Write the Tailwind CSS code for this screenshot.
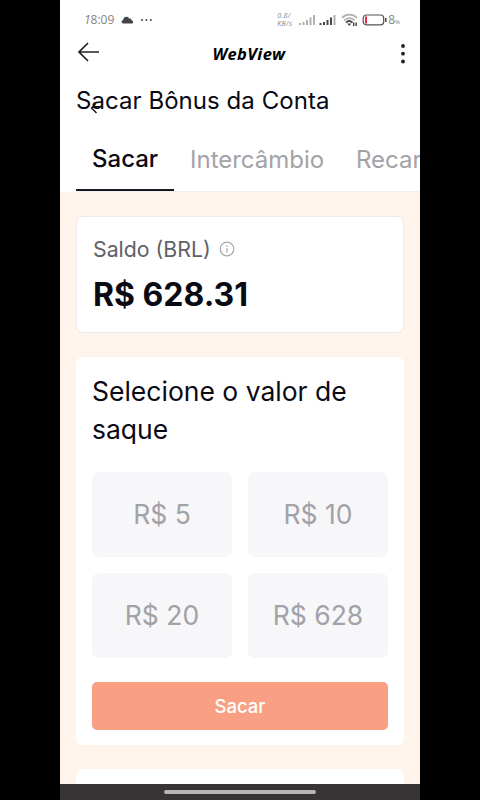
<!DOCTYPE html>
<html lang="pt-BR">
<head>
<meta charset="utf-8">
<title>WebView</title>
<script src="https://cdn.jsdelivr.net/npm/@tailwindcss/browser@4"></script>
</head>
<body class="bg-black font-['Inter',sans-serif] text-[#090a13]">
<div class="mx-auto flex h-[800px] w-[360px] flex-col overflow-hidden bg-[#fff4ec]">
  <header class="shrink-0 bg-white">
    <!-- Status bar -->
    <div class="flex h-[39px] items-center pl-[24px] pr-[20px] font-['Open_Sans',sans-serif] text-[#858585]">
      <span class="w-[32px] whitespace-nowrap text-[12px] leading-none"><i>1</i>8:09</span>
      <svg class="ml-[5px]" width="13" height="8" viewBox="0 0 13 8" fill="#454545"><path d="M2.500 7.500C.2 7.500 0 4.400 2.200 4 2.400 1.500 4 .6 5.600.7c1.300.1 2.200.8 2.600 1.900 1.400-.3 2.400.5 2.500 1.800 2 .2 1.900 3.100-.2 3.100z"/></svg>
      <svg class="ml-[6px]" width="13" height="4" viewBox="0 0 13 4" fill="#454545"><circle cx="2" cy="2" r="1"/><circle cx="6.400" cy="2" r="1"/><circle cx="10.800" cy="2" r="1"/></svg>
      <span class="ml-auto w-[21px] whitespace-nowrap text-[7px] italic leading-[8px] tracking-[0.400px]">0.8/<br>KB/s</span>
      <svg class="shrink-0" width="18" height="12" viewBox="0 0 18 12" stroke="#b0b0b0" stroke-width="2"><path d="M2 11V9M5.500 11V8M9 11V6M12.500 11V3.500M16 11V1"/></svg>
      <svg class="ml-[3px] shrink-0" width="18" height="12" viewBox="0 0 18 12" stroke-width="2"><path stroke="#454545" d="M1.500 11V9M5 11V8M8.500 11V6M12 11V3.500"/><path stroke="#b0b0b0" d="M15.500 11V1"/></svg>
      <svg class="ml-[4px] shrink-0" width="17" height="14" viewBox="0 0 17 14" fill="none" stroke-width="1.700"><path stroke="#b0b0b0" d="M1 4.800C5 .5 12 .5 16 4.800M3.200 7.500C6 4.400 11 4.400 13.500 7.500"/><path stroke="#454545" d="M5 9.600c2-2 4.500-2 6.500 0"/><path fill="#454545" d="M6.300 10.500h4L8.300 13z"/><path stroke="#454545" stroke-width="1.500" d="M12.700 9.500v3.500M15.200 9.500v3.500"/></svg>
      <svg class="ml-[4px] shrink-0" width="25" height="12" viewBox="0 0 25 12" fill="none"><rect x="1.200" y="1" width="20.500" height="9.800" rx="3" stroke="#555059" stroke-width="1.200"/><path stroke="#ee2945" stroke-width="2" d="M4 2.500v7"/><path stroke="#454545" stroke-width="1.500" d="M23.800 4v4"/></svg>
      <span class="ml-[1px] text-[12px] leading-none">8<span class="text-[6px]">%</span></span>
    </div>
    <!-- App bar -->
    <div class="flex h-[30px] items-center justify-between pl-[17px] pr-[11px]">
      <svg class="-mt-[4px]" width="24" height="20" viewBox="0 0 24 20" fill="none" stroke="#222" stroke-width="1.700"><path d="M22 10H2M11 1 2 10l9 9"/></svg>
      <h1 class="font-['Noto_Sans',sans-serif] text-[16.500px] font-bold italic leading-none tracking-[0.400px] text-black">WebView</h1>
      <svg width="12" height="24" viewBox="0 0 12 24" fill="#1f1f1f"><circle cx="6" cy="4" r="1.900"/><circle cx="6" cy="11.700" r="1.900"/><circle cx="6" cy="19.500" r="1.900"/></svg>
    </div>
    <div class="relative h-[58px] pl-[16px]">
      <h2 class="whitespace-nowrap pt-[16px] text-[24px] leading-[32px] tracking-[0.050px]">Sacar Bônus da Conta</h2>
      <svg class="absolute left-[30px] top-[33px]" width="15" height="12" viewBox="0 0 15 12" fill="none" stroke="#090a13" stroke-width="1.300"><path d="M5.500 2 1.500 6l5 5M2 5.500l3-.8h8"/></svg>
    </div>
    <nav class="ml-[16px] flex h-[65px] overflow-hidden whitespace-nowrap border-b border-[#f5eeed] text-[24px] leading-[32px] text-[#a2a2a7]">
      <span class="w-[98px] shrink-0 border-b-2 border-[#171923] pl-[16px] pt-[16px] font-medium text-[#090a13]">Sacar</span>
      <span class="w-[166px] shrink-0 pl-[16px] pt-[17px]">Intercâmbio</span>
      <span class="shrink-0 pl-[16px] pt-[17px]">Recarga</span>
    </nav>
  </header>
  <main class="flex min-h-0 flex-1 flex-col gap-[24px] overflow-hidden px-[16px] pt-[24px]">
    <section class="h-[117px] shrink-0 rounded-[7px] border border-[#f1e9ea] bg-white pl-[16px] pt-[16px]">
      <div class="flex h-[32px] items-center gap-[8px] text-[21.300px] text-[#606167]">
        <span class="pt-[1px]">Saldo (BRL)</span>
        <svg width="16" height="16" viewBox="0 0 16 16" fill="none" stroke="#a4a4a9" stroke-width="1.200"><circle cx="8" cy="8" r="6.800"/><path d="M8 7.200v4.300M8 4.300v1.500"/></svg>
      </div>
      <div class="mt-[10px] text-[32px] font-bold leading-[40px]">R$ 628.31</div>
    </section>
    <section class="h-[388px] shrink-0 rounded-[7px] bg-white px-[16px] pt-[15px]">
      <h3 class="text-[26.500px] leading-[38px]">Selecione o valor de saque</h3>
      <div class="mt-[24px] grid grid-cols-2 gap-[16px] text-[26.500px] text-[#a2a2a7]">
        <button class="h-[85px] rounded-[7px] bg-[#f7f7fa]">R$ 5</button>
        <button class="h-[85px] rounded-[7px] bg-[#f7f7fa]">R$ 10</button>
        <button class="h-[85px] rounded-[7px] bg-[#f7f7fa]">R$ 20</button>
        <button class="h-[85px] rounded-[7px] bg-[#f7f7fa]">R$ 628</button>
      </div>
      <button class="mt-[24px] block h-[48px] w-full rounded-[5px] bg-[#f99f84] pt-[2px] text-[18.500px] font-medium text-white">Sacar</button>
    </section>
    <section class="h-[100px] shrink-0 rounded-[7px] bg-white"></section>
  </main>
  <footer class="flex h-[16px] shrink-0 items-center justify-center bg-[#353334]">
    <div class="h-[4px] w-[152px] rounded-full bg-[#b5b3b4]"></div>
  </footer>
</div>
</body>
</html>
